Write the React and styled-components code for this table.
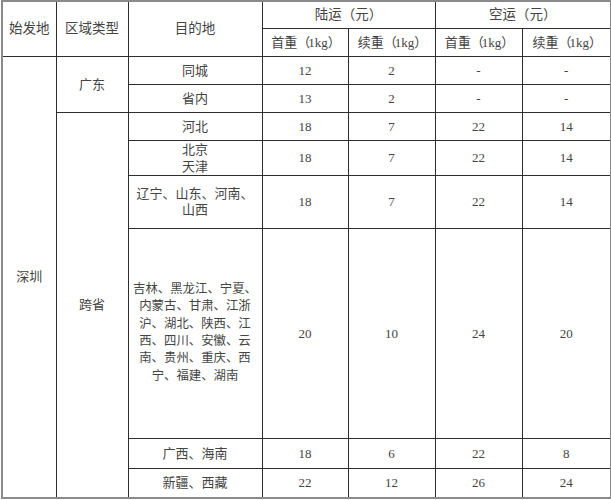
import React from "react";
import styled, { createGlobalStyle } from "styled-components";

const Global = createGlobalStyle`
  html, body { margin: 0; padding: 0; background: #fff; }
  body { width: 611px; height: 500px; overflow: hidden; }
`;

const Page = styled.div`
  padding: 0 0 0 1px;
`;

const Table = styled.table`
  width: 609px;
  table-layout: fixed;
  border-collapse: collapse;
  border: 2px solid #8a8a8a;
  font-family: "Liberation Serif", "Noto Sans CJK SC", serif;
  color: #444;
  font-size: 13px;
`;

const Row = styled.tr`
  height: ${(p) => p.$h}px;
`;

const Cell = styled.td`
  border: 1px solid #2e2e2e;
  padding: 0;
  text-align: center;
  vertical-align: middle;
  line-height: ${(p) => (p.$lh ? p.$lh : 17)}px;
  font-size: ${(p) => (p.$fs ? p.$fs : 13)}px;
  font-weight: 400;
  white-space: nowrap;
`;

const Paren = styled.span`
  letter-spacing: -2px;
`;

const cols = [54, 72, 134, 86, 87, 87, 89];

const body = [
  { h: 28, dest: ["同城"], v: ["12", "2", "-", "-"] },
  { h: 28, dest: ["省内"], v: ["13", "2", "-", "-"] },
  { h: 28, dest: ["河北"], v: ["18", "7", "22", "14"] },
  { h: 35, dest: ["北京", "天津"], v: ["18", "7", "22", "14"], lh: 17 },
  { h: 53, dest: ["辽宁、山东、河南、", "山西"], v: ["18", "7", "22", "14"], lh: 16 },
  {
    h: 210,
    dest: [
      "吉林、黑龙江、宁夏、",
      "内蒙古、甘肃、江浙",
      "沪、湖北、陕西、江",
      "西、四川、安徽、云",
      "南、贵州、重庆、西",
      "宁、福建、湖南",
    ],
    v: ["20", "10", "24", "20"],
    lh: 17.4,
    fs: 12.4,
  },
  { h: 30, dest: ["广西、海南"], v: ["18", "6", "22", "8"] },
  { h: 30, dest: ["新疆、西藏"], v: ["22", "12", "26", "24"] },
];

const Lines = ({ items }) =>
  items.map((t, i) => (
    <React.Fragment key={i}>
      {i > 0 && <br />}
      {t}
    </React.Fragment>
  ));

const Weight = ({ label }) => (
  <>
    {label}
    <Paren>（</Paren>1kg<Paren>）</Paren>
  </>
);

export default function App() {
  return (
    <>
      <Global />
      <Page>
        <Table>
          <colgroup>
            {cols.map((w, i) => (
              <col key={i} style={{ width: w }} />
            ))}
          </colgroup>
          <tbody>
            <Row $h={27}>
              <Cell $fs={13.5} rowSpan={2}>始发地</Cell>
              <Cell $fs={13.5} rowSpan={2}>区域类型</Cell>
              <Cell $fs={13.5} rowSpan={2}>目的地</Cell>
              <Cell $fs={13.5} colSpan={2}>陆运（元）</Cell>
              <Cell $fs={13.5} colSpan={2}>空运（元）</Cell>
            </Row>
            <Row $h={28}>
              <Cell><Weight label="首重" /></Cell>
              <Cell><Weight label="续重" /></Cell>
              <Cell><Weight label="首重" /></Cell>
              <Cell><Weight label="续重" /></Cell>
            </Row>
            {body.map((r, i) => (
              <Row key={i} $h={r.h}>
                {i === 0 && <Cell rowSpan={body.length}>深圳</Cell>}
                {i === 0 && <Cell rowSpan={2}>广东</Cell>}
                {i === 2 && <Cell rowSpan={body.length - 2}>跨省</Cell>}
                <Cell $lh={r.lh} $fs={r.fs}>
                  <Lines items={r.dest} />
                </Cell>
                {r.v.map((x, j) => (
                  <Cell key={j}>{x}</Cell>
                ))}
              </Row>
            ))}
          </tbody>
        </Table>
      </Page>
    </>
  );
}
